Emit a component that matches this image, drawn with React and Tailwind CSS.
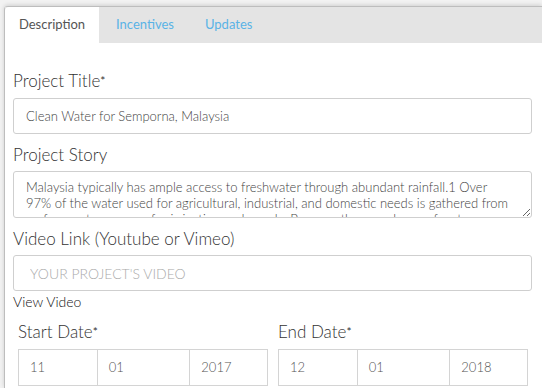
import React from 'react';

const font = { fontFamily: 'Lato, "Open Sans", Arial, sans-serif' };

function Label({ children, required }) {
  return (
    <div className="text-[17px] font-light leading-[20px] text-[#333]">
      {children}
      {required && <sup className="relative -top-[2px] text-[12px] font-normal">*</sup>}
    </div>
  );
}

function DateGroup({ label, parts }) {
  return (
    <div className="flex w-[250px] flex-col">
      <Label required>{label}</Label>
      <div className="mt-[7px] flex">
        {parts.map((p, i) => (
          <div
            key={i}
            className={`flex h-[37px] items-center border border-[#d4d4d4] pl-[11px] text-[13px] font-light text-[#555] ${
              i === 0 ? 'w-[80px]' : i === 1 ? 'w-[93px] border-l-0' : 'w-[78px] border-l-0'
            }`}
          >
            {p}
          </div>
        ))}
      </div>
    </div>
  );
}

export default function App() {
  const story =
    'Malaysia typically has ample access to freshwater through abundant rainfall.1 Over\n97% of the water used for agricultural, industrial, and domestic needs is gathered from\nsurface water sources for irrigation and supply. Because the prevalence of water...';

  return (
    <div className="h-[388px] w-[542px] overflow-hidden bg-[#f2f2f2] pl-[4px] pt-[6px]" style={font}>
      <div className="h-full rounded-tl-[4px] border-l border-t border-[#bdbdbd] bg-white shadow-[0_-1px_4px_rgba(0,0,0,0.15)]">
        <div className="flex h-[36px] bg-[#e4e4e4]">
          <div className="flex w-[94px] items-center justify-center rounded-tl-[4px] bg-white text-[13px] text-[#555]">
            Description
          </div>
          <div className="flex items-center pl-[17px] text-[13px] text-[#5ab3e6]">Incentives</div>
          <div className="flex items-center pl-[31px] text-[13px] text-[#5ab3e6]">Updates</div>
        </div>

        <div className="flex flex-col pl-[8px] pr-[10px] pt-[28px]">
          <Label required>Project Title</Label>
          <input
            readOnly
            value="Clean Water for Semporna, Malaysia"
            className="mt-[7px] h-[36px] w-[519px] rounded-[3px] border border-[#cfcfcf] px-[12px] text-[13px] font-light text-[#444] outline-none"
            style={font}
          />

          <div className="mt-[11px]">
            <Label>Project Story</Label>
          </div>
          <textarea
            readOnly
            value={story}
            className="mt-[6px] h-[47px] w-[519px] resize-y overflow-hidden whitespace-pre rounded-[3px] border border-[#cfcfcf] px-[12px] pt-[7px] text-[13px] font-light leading-[16px] text-[#444] outline-none"
            style={font}
          />

          <div className="mt-[11px]">
            <Label>Video Link (Youtube or Vimeo)</Label>
          </div>
          <input
            readOnly
            placeholder="YOUR PROJECT'S VIDEO"
            className="mt-[6px] h-[36px] w-[519px] rounded-[3px] border border-[#cfcfcf] px-[16px] text-[14px] font-light text-[#555] outline-none placeholder:text-[#aaa]"
            style={font}
          />

          <div className="mt-[2px] text-[14px] font-light leading-[18px] text-[#111]">View Video</div>

          <div className="mt-[11px] flex gap-[10px] pl-[5px]">
            <DateGroup label="Start Date" parts={['11', '01', '2017']} />
            <DateGroup label="End Date" parts={['12', '01', '2018']} />
          </div>
        </div>
      </div>
    </div>
  );
}
